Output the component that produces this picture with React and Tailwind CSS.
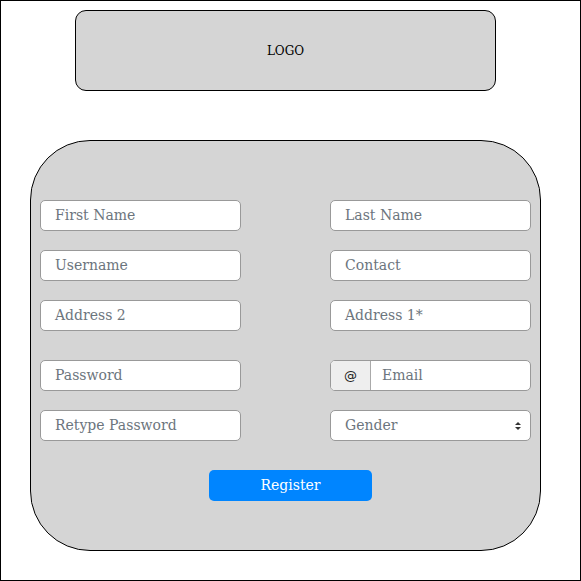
import React from 'react';

const inputCls =
  "w-[201px] h-[31px] rounded-[5px] border border-[#999] bg-white px-[14px] text-[14px] text-[#6c757d] flex items-center";

function Field({ label }) {
  return <div className={inputCls}>{label}</div>;
}

function EmailField() {
  return (
    <div className="w-[201px] h-[31px] rounded-[5px] border border-[#999] bg-white flex overflow-hidden">
      <div className="w-[40px] flex items-center justify-center bg-[#eee] border-r border-[#aaa] text-[13px] text-[#222] font-['DejaVu_Sans',sans-serif]">
        @
      </div>
      <div className="flex items-center pl-[11px] text-[14px] text-[#6c757d]">Email</div>
    </div>
  );
}

function GenderSelect() {
  return (
    <div className={inputCls + " justify-between pr-[8px]"}>
      <span>Gender</span>
      <svg width="8" height="12" viewBox="0 0 8 12">
        <path d="M1 5 L4 2 L7 5 Z" fill="#333" />
        <path d="M1 7 L4 10 L7 7 Z" fill="#333" />
      </svg>
    </div>
  );
}

export default function App() {
  return (
    <div className="w-[581px] h-[581px] border border-black bg-white font-['DejaVu_Serif',serif] flex flex-col">
      {/* Logo */}
      <div className="mt-[9px] ml-[74px] w-[421px] h-[81px] rounded-[11px] border border-black bg-[#d5d5d5] flex items-center justify-center text-[12px] text-black">
        LOGO
      </div>

      {/* Form */}
      <div className="mt-[49px] ml-[29px] w-[511px] h-[411px] rounded-[60px] border border-black bg-[#d5d5d5] pt-[59px] px-[9px] flex flex-col">
        <div className="grid grid-cols-[201px_201px] gap-x-[89px] gap-y-[19px]">
          <Field label="First Name" />
          <Field label="Last Name" />
          <Field label="Username" />
          <Field label="Contact" />
          <Field label="Address 2" />
          <Field label="Address 1*" />
        </div>
        <div className="grid grid-cols-[201px_201px] gap-x-[89px] gap-y-[19px] mt-[29px]">
          <Field label="Password" />
          <EmailField />
          <Field label="Retype Password" />
          <GenderSelect />
        </div>
        <div className="mt-[29px] ml-[169px]">
          <button className="w-[163px] h-[31px] rounded-[5px] bg-[#0085ff] text-white text-[14px]">
            Register
          </button>
        </div>
      </div>
    </div>
  );
}
